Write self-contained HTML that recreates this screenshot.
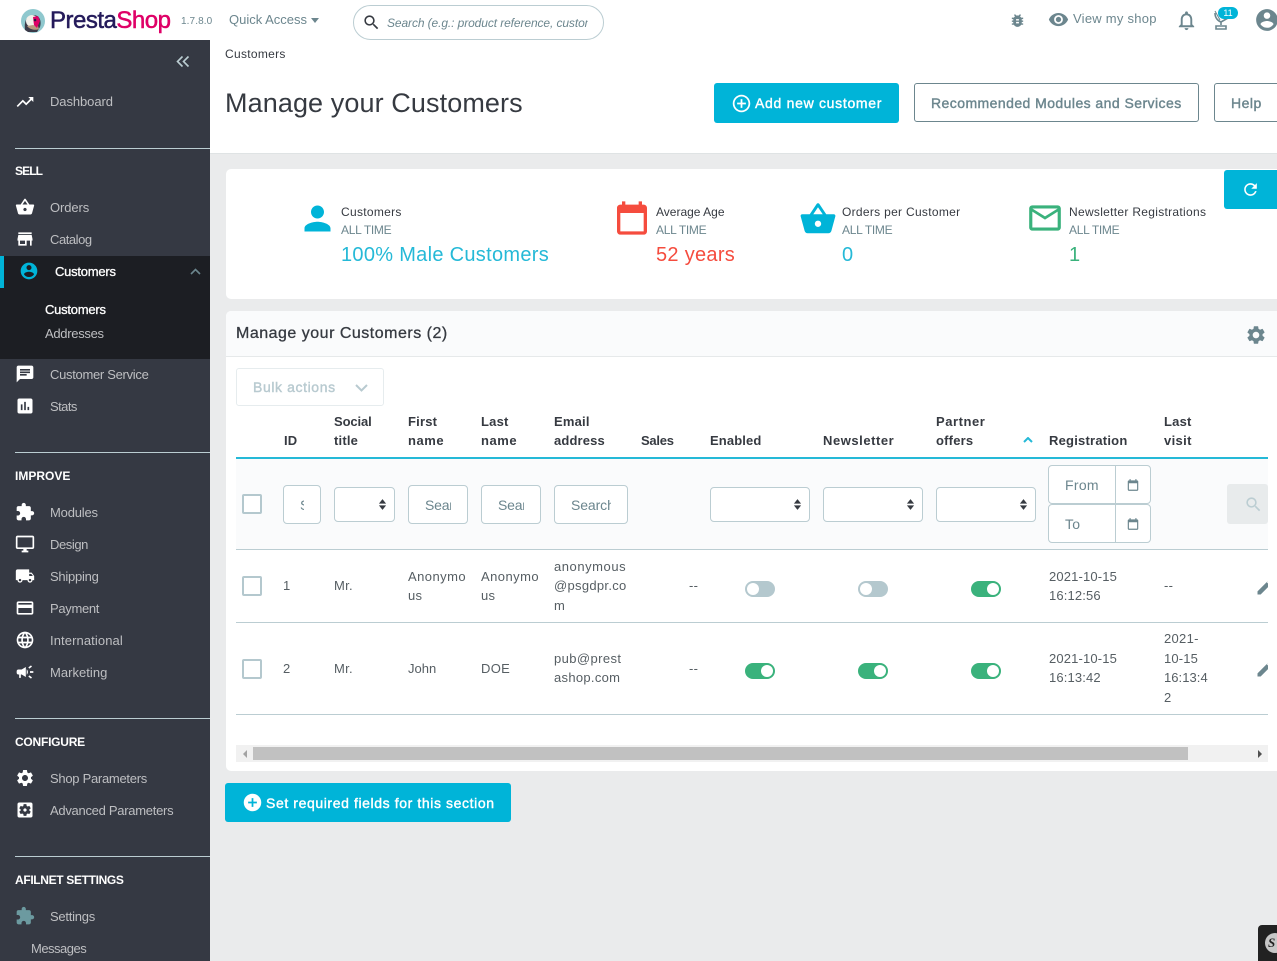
<!DOCTYPE html>
<html lang="en"><head><meta charset="utf-8"><title>Manage your Customers</title>
<style>
html,body{margin:0;padding:0}
body{width:1277px;height:961px;overflow:hidden;position:relative;background:#eaebec;font-family:"Liberation Sans",sans-serif;font-size:13px;color:#363a41}
.a,.t,svg.i{position:absolute}
.t{white-space:nowrap;line-height:20px;height:20px;letter-spacing:.3px}
.s{-webkit-text-stroke:.3px currentColor}
.w{-webkit-text-stroke:.4px currentColor}
.m{color:#bebfc2;letter-spacing:-.2px;margin-top:1px}
.h{color:#fff;font-weight:bold;font-size:12px;letter-spacing:-.2px;margin-top:1px}
.d{height:1px;left:15px;width:195px;background:#bbcdd2}
.g{color:#6c868e;font-size:12px}
.k{letter-spacing:-.3px;margin-top:1px}
.th{font-weight:bold;color:#363a41;letter-spacing:.2px;margin-top:1px}
.b{color:#565e63;font-size:13px;letter-spacing:.3px}
.c{color:#363a41;margin-top:1px}
.in{background:#fff;border:1px solid #bbcdd2;border-radius:4px;box-sizing:border-box}
.cb{width:20px;height:20px;border:2px solid #b4c8ce;border-radius:2px;box-sizing:border-box;background:#fff;left:242px}
.tg{width:30px;height:16px;border-radius:8px}
.tg:after{content:"";position:absolute;top:2px;width:12px;height:12px;border-radius:50%;background:#fff}
.on{background:#3ab27c}.on:after{right:2px}
.of{background:#b4c8ce}.of:after{left:2px}
.r{height:1px;left:236px;width:1032px;background:#bbcdd2}
svg.i{fill:currentColor}
</style></head><body>
<svg width="0" height="0" style="position:absolute"><defs>
<symbol id="trend" viewBox="0 0 24 24"><path d="M16 6l2.29 2.29-4.88 4.88-4-4L2 16.59 3.41 18l6-6 4 4 6.3-6.29L22 12V6z"/></symbol>
<symbol id="basket" viewBox="0 0 24 24"><path d="M17.21 9l-4.38-6.56c-.19-.28-.51-.42-.83-.42-.32 0-.64.14-.83.43L6.79 9H2c-.55 0-1 .45-1 1 0 .09.01.18.04.27l2.54 9.27c.23.84 1 1.46 1.92 1.46h13c.92 0 1.69-.62 1.93-1.46l2.54-9.27L23 10c0-.55-.45-1-1-1h-4.79zM9 9l3-4.4L15 9H9zm3 8c-1.1 0-2-.9-2-2s.9-2 2-2 2 .9 2 2-.9 2-2 2z"/></symbol>
<symbol id="store" viewBox="0 0 24 24"><path d="M20 4H4v2h16V4zm1 10v-2l-1-5H4l-1 5v2h1v6h10v-6h4v6h2v-6h1zm-9 4H6v-4h6v4z"/></symbol>
<symbol id="acct" viewBox="0 0 24 24"><path d="M12 2C6.48 2 2 6.48 2 12s4.48 10 10 10 10-4.48 10-10S17.52 2 12 2zm0 3c1.66 0 3 1.34 3 3s-1.34 3-3 3-3-1.34-3-3 1.34-3 3-3zm0 14.2c-2.5 0-4.71-1.28-6-3.22.03-1.99 4-3.08 6-3.08 1.99 0 5.97 1.09 6 3.08-1.29 1.94-3.5 3.22-6 3.22z"/></symbol>
<symbol id="chat" viewBox="0 0 24 24"><path d="M20 2H4c-1.1 0-1.99.9-1.99 2L2 22l4-4h14c1.1 0 2-.9 2-2V4c0-1.1-.9-2-2-2zM6 9h12v2H6V9zm8 5H6v-2h8v2zm4-6H6V6h12v2z"/></symbol>
<symbol id="stats" viewBox="0 0 24 24"><path d="M19 3H5c-1.1 0-2 .9-2 2v14c0 1.1.9 2 2 2h14c1.1 0 2-.9 2-2V5c0-1.1-.9-2-2-2zM9 17H7v-7h2v7zm4 0h-2V7h2v10zm4 0h-2v-4h2v4z"/></symbol>
<symbol id="ext" viewBox="0 0 24 24"><path d="M20.5 11H19V7c0-1.1-.9-2-2-2h-4V3.5C13 2.12 11.88 1 10.5 1S8 2.12 8 3.5V5H4c-1.1 0-1.99.9-1.99 2v3.8H3.5c1.49 0 2.7 1.21 2.7 2.7s-1.21 2.7-2.7 2.7H2V20c0 1.1.9 2 2 2h3.8v-1.5c0-1.49 1.21-2.7 2.7-2.7 1.49 0 2.7 1.21 2.7 2.7V22H17c1.1 0 2-.9 2-2v-4h1.5c1.38 0 2.5-1.12 2.5-2.5S21.88 11 20.5 11z"/></symbol>
<symbol id="desk" viewBox="0 0 24 24"><path d="M21 2H3c-1.1 0-2 .9-2 2v12c0 1.1.9 2 2 2h7v2H8v2h8v-2h-2v-2h7c1.1 0 2-.9 2-2V4c0-1.1-.9-2-2-2zm0 14H3V4h18v12z"/></symbol>
<symbol id="ship" viewBox="0 0 24 24"><path d="M20 8h-3V4H3c-1.1 0-2 .9-2 2v11h2c0 1.66 1.34 3 3 3s3-1.34 3-3h6c0 1.66 1.34 3 3 3s3-1.34 3-3h2v-5l-3-4zM6 18.5c-.83 0-1.5-.67-1.5-1.5s.67-1.5 1.5-1.5 1.5.67 1.5 1.5-.67 1.5-1.5 1.5zm13.5-9l1.96 2.5H17V9.5h2.5zm-1.5 9c-.83 0-1.5-.67-1.5-1.5s.67-1.5 1.5-1.5 1.5.67 1.5 1.5-.67 1.5-1.5 1.5z"/></symbol>
<symbol id="pay" viewBox="0 0 24 24"><path d="M20 4H4c-1.11 0-1.99.89-1.99 2L2 18c0 1.11.89 2 2 2h16c1.11 0 2-.89 2-2V6c0-1.11-.89-2-2-2zm0 14H4v-6h16v6zm0-10H4V6h16v2z"/></symbol>
<symbol id="lang" viewBox="0 0 24 24"><path d="M11.99 2C6.47 2 2 6.48 2 12s4.47 10 9.99 10C17.52 22 22 17.52 22 12S17.52 2 11.99 2zm6.93 6h-2.95c-.32-1.25-.78-2.45-1.38-3.56 1.84.63 3.37 1.91 4.33 3.56zM12 4.04c.83 1.2 1.48 2.53 1.91 3.96h-3.82c.43-1.43 1.08-2.76 1.91-3.96zM4.26 14C4.1 13.36 4 12.69 4 12s.1-1.36.26-2h3.38c-.08.66-.14 1.32-.14 2 0 .68.06 1.34.14 2H4.26zm.82 2h2.95c.32 1.25.78 2.45 1.38 3.56-1.84-.63-3.37-1.9-4.33-3.56zm2.95-8H5.08c.96-1.66 2.49-2.93 4.33-3.56C8.81 5.55 8.35 6.75 8.03 8zM12 19.96c-.83-1.2-1.48-2.53-1.91-3.96h3.82c-.43 1.43-1.08 2.76-1.91 3.96zM14.34 14H9.66c-.09-.66-.16-1.32-.16-2 0-.68.07-1.35.16-2h4.68c.09.65.16 1.32.16 2 0 .68-.07 1.34-.16 2zm.25 5.56c.6-1.11 1.06-2.31 1.38-3.56h2.95c-.96 1.65-2.49 2.93-4.33 3.56zM16.36 14c.08-.66.14-1.32.14-2 0-.68-.06-1.34-.14-2h3.38c.16.64.26 1.31.26 2s-.1 1.36-.26 2h-3.38z"/></symbol>
<symbol id="mega" viewBox="0 0 24 24"><path d="M18 11v2h4v-2h-4zm-2 6.61c.96.71 2.21 1.65 3.2 2.39.4-.53.8-1.07 1.2-1.6-.99-.74-2.24-1.68-3.2-2.4-.4.54-.8 1.08-1.2 1.61zM20.4 5.6c-.4-.53-.8-1.07-1.2-1.6-.99.74-2.24 1.68-3.2 2.4.4.53.8 1.07 1.2 1.6.96-.72 2.21-1.65 3.2-2.4zM4 9c-1.1 0-2 .9-2 2v2c0 1.1.9 2 2 2h1v4h2v-4h1l5 3V6L8 9H4zm11.5 3c0-1.33-.58-2.53-1.5-3.35v6.69c.92-.81 1.5-2.01 1.5-3.34z"/></symbol>
<symbol id="gear" viewBox="0 0 24 24"><path d="M19.14 12.94c.04-.3.06-.61.06-.94 0-.32-.02-.64-.07-.94l2.03-1.58c.18-.14.23-.41.12-.61l-1.92-3.32c-.12-.22-.37-.29-.59-.22l-2.39.96c-.5-.38-1.03-.7-1.62-.94l-.36-2.54c-.04-.24-.24-.41-.48-.41h-3.84c-.24 0-.43.17-.47.41l-.36 2.54c-.59.24-1.13.57-1.62.94l-2.39-.96c-.22-.08-.47 0-.59.22L2.74 8.87c-.12.21-.08.47.12.61l2.03 1.58c-.05.3-.09.63-.09.94s.02.64.07.94l-2.03 1.58c-.18.14-.23.41-.12.61l1.92 3.32c.12.22.37.29.59.22l2.39-.96c.5.38 1.03.7 1.62.94l.36 2.54c.05.24.24.41.48.41h3.84c.24 0 .44-.17.47-.41l.36-2.54c.59-.24 1.13-.56 1.62-.94l2.39.96c.22.08.47 0 .59-.22l1.92-3.32c.12-.22.07-.47-.12-.61l-2.01-1.58zM12 15.6c-1.98 0-3.6-1.62-3.6-3.6s1.62-3.6 3.6-3.6 3.6 1.62 3.6 3.6-1.62 3.6-3.6 3.6z"/></symbol>
<symbol id="adv" viewBox="0 0 24 24"><path d="M12 10c-1.1 0-2 .9-2 2s.9 2 2 2 2-.9 2-2-.9-2-2-2zm7-7H5c-1.11 0-2 .9-2 2v14c0 1.1.89 2 2 2h14c1.11 0 2-.9 2-2V5c0-1.1-.89-2-2-2zm-1.75 9c0 .23-.02.46-.05.68l1.48 1.16c.13.11.17.3.08.45l-1.4 2.42c-.09.15-.27.21-.43.15l-1.74-.7c-.36.28-.76.51-1.18.69l-.26 1.85c-.03.17-.18.3-.35.3h-2.8c-.17 0-.32-.13-.35-.29l-.26-1.85c-.43-.18-.82-.41-1.18-.69l-1.74.7c-.16.06-.34 0-.43-.15l-1.4-2.42c-.09-.15-.05-.34.08-.45l1.48-1.16c-.03-.23-.05-.46-.05-.69 0-.23.02-.46.05-.68l-1.48-1.16c-.13-.11-.17-.3-.08-.45l1.4-2.42c.09-.15.27-.21.43-.15l1.74.7c.36-.28.76-.51 1.18-.69l.26-1.85c.03-.17.18-.3.35-.3h2.8c.17 0 .32.13.35.29l.26 1.85c.43.18.82.41 1.18.69l1.74-.7c.16-.06.34 0 .43.15l1.4 2.42c.09.15.05.34-.08.45l-1.48 1.16c.03.23.05.46.05.69z"/></symbol>
<symbol id="bug" viewBox="0 0 24 24"><path d="M20 8h-2.81c-.45-.78-1.07-1.45-1.82-1.96L17 4.41 15.59 3l-2.17 2.17C12.96 5.06 12.49 5 12 5c-.49 0-.96.06-1.41.17L8.41 3 7 4.41l1.62 1.63C7.88 6.55 7.26 7.22 6.81 8H4v2h2.09c-.05.33-.09.66-.09 1v1H4v2h2v1c0 .34.04.67.09 1H4v2h2.81c1.04 1.79 2.97 3 5.19 3s4.15-1.21 5.19-3H20v-2h-2.09c.05-.33.09-.66.09-1v-1h2v-2h-2v-1c0-.34-.04-.67-.09-1H20V8zm-6 8h-4v-2h4v2zm0-4h-4v-2h4v2z"/></symbol>
<symbol id="eye" viewBox="0 0 24 24"><path d="M12 4.5C7 4.5 2.73 7.61 1 12c1.73 4.39 6 7.5 11 7.5s9.27-3.11 11-7.5c-1.73-4.39-6-7.5-11-7.5zM12 17c-2.76 0-5-2.24-5-5s2.24-5 5-5 5 2.24 5 5-2.24 5-5 5zm0-8c-1.66 0-3 1.34-3 3s1.34 3 3 3 3-1.34 3-3-1.34-3-3-3z"/></symbol>
<symbol id="bell" viewBox="0 0 24 24"><path d="M12 22c1.1 0 2-.9 2-2h-4c0 1.1.89 2 2 2zm6-6v-5c0-3.07-1.64-5.64-4.5-6.32V4c0-.83-.67-1.5-1.5-1.5s-1.5.67-1.5 1.5v.68C7.63 5.36 6 7.92 6 11v5l-2 2v1h16v-1l-2-2zm-2 1H8v-6c0-2.48 1.51-4.5 4-4.5s4 2.02 4 4.5v6z"/></symbol>
<symbol id="ref" viewBox="0 0 24 24"><path d="M17.65 6.35C16.2 4.9 14.21 4 12 4c-4.42 0-7.99 3.58-7.99 8s3.57 8 7.99 8c3.73 0 6.84-2.55 7.73-6h-2.08c-.82 2.33-3.04 4-5.65 4-3.31 0-6-2.69-6-6s2.69-6 6-6c1.66 0 3.14.69 4.22 1.78L13 11h7V4l-2.35 2.35z"/></symbol>
<symbol id="person" viewBox="0 0 24 24"><path d="M12 12c2.21 0 4-1.79 4-4s-1.79-4-4-4-4 1.79-4 4 1.79 4 4 4zm0 2c-2.67 0-8 1.34-8 4v2h16v-2c0-2.66-5.33-4-8-4z"/></symbol>
<symbol id="mail" viewBox="0 0 24 24"><path d="M20 4H4c-1.1 0-1.99.9-1.99 2L2 18c0 1.1.9 2 2 2h16c1.1 0 2-.9 2-2V6c0-1.1-.9-2-2-2zm0 14H4V8l8 5 8-5v10zm-8-7L4 6h16l-8 5z" fill-rule="evenodd"/></symbol>
<symbol id="cal" viewBox="0 0 24 24"><path d="M19 4h-1V2h-2v2H8V2H6v2H5c-1.11 0-2 .9-2 2v14a2 2 0 0 0 2 2h14c1.1 0 2-.9 2-2V6c0-1.1-.9-2-2-2zm0 16H5V9h14v11z"/></symbol>
<symbol id="edit" viewBox="0 0 24 24"><path d="M3 17.25V21h3.75L17.81 9.94l-3.75-3.75L3 17.25zM20.71 7.04c.39-.39.39-1.02 0-1.41l-2.34-2.34c-.39-.39-1.02-.39-1.41 0l-1.83 1.83 3.75 3.75 1.83-1.83z"/></symbol>
<symbol id="search" viewBox="0 0 24 24"><path d="M15.5 14h-.79l-.28-.27C15.41 12.59 16 11.11 16 9.5 16 5.91 13.09 3 9.5 3S3 5.91 3 9.5 5.91 16 9.5 16c1.61 0 3.09-.59 4.23-1.57l.27.28v.79l5 4.99L20.49 19l-4.99-5zm-6 0C7.01 14 5 11.99 5 9.5S7.01 5 9.5 5 14 7.01 14 9.5 11.99 14 9.5 14z"/></symbol>
<symbol id="addo" viewBox="0 0 24 24"><path d="M13 7h-2v4H7v2h4v4h2v-4h4v-2h-4V7zm-1-5C6.48 2 2 6.48 2 12s4.48 10 10 10 10-4.48 10-10S17.52 2 12 2zm0 18c-4.41 0-8-3.59-8-8s3.59-8 8-8 8 3.59 8 8-3.59 8-8 8z"/></symbol>
<symbol id="add" viewBox="0 0 24 24"><path d="M12 2C6.48 2 2 6.48 2 12s4.48 10 10 10 10-4.48 10-10S17.52 2 12 2zm5 11h-4v4h-2v-4H7v-2h4V7h2v4h4v2z"/></symbol>
<symbol id="updown" viewBox="0 0 10 14"><path d="M5 1l4 5H1zM5 13L1 8h8z"/></symbol>
</defs></svg>

<!-- Header -->
<div class="a" style="left:0;top:0;width:1277px;height:153px;background:#fff"></div>
<svg class="a" style="left:20px;top:8px" width="26" height="26" viewBox="0 0 26 26"><circle cx="13" cy="13" r="12" fill="#8fc8ce"/><path d="M5 22c-1-8 1-14 8-15 6 0 9 5 7 12l-3 5H8z" fill="#3b3a48"/><circle cx="12" cy="13" r="6" fill="#f2efe9"/><path d="M7 18c2 3 8 5 12 3l-1-3-5-1z" fill="#b79a7f"/><path d="M13 9l5-1 2 5-3 7-3-3z" fill="#df0067"/><circle cx="15" cy="12" r="1.3" fill="#2a1a3e"/></svg>
<div class="t" style="left:50px;top:6px;height:30px;line-height:30px;font-size:24px;letter-spacing:-.5px;color:#251b5b;-webkit-text-stroke:.5px currentColor">Presta<span style="color:#df0067">Shop</span></div>
<div class="t" style="left:181px;top:12px;font-size:10px;color:#6c868e;letter-spacing:.1px">1.7.8.0</div>
<div class="t" style="left:229px;top:9px;color:#6c868e;letter-spacing:0;margin-top:1px">Quick Access</div>
<div class="a" style="left:311px;top:18px;border:4.5px solid transparent;border-top:5px solid #6c868e;border-bottom:0"></div>
<div class="a" style="left:353px;top:5px;width:251px;height:35px;border:1px solid #bbcdd2;border-radius:18px;box-sizing:border-box;background:#fff"></div>
<svg class="i" style="left:362px;top:13px;color:#363a41" width="19" height="19"><use href="#search"/></svg>
<div class="t" style="left:387px;top:13px;width:201px;overflow:hidden;font-style:italic;font-size:12px;color:#6c868e;letter-spacing:-.1px">Search (e.g.: product reference, custom</div>

<svg class="i" style="left:1009px;top:12px;color:#6c868e" width="17" height="17"><use href="#bug"/></svg>
<svg class="i" style="left:1048px;top:9px;color:#6c868e" width="21" height="21"><use href="#eye"/></svg>
<div class="t" style="left:1073px;top:9px;color:#6c868e;letter-spacing:.25px">View my shop</div>
<svg class="i" style="left:1175px;top:9px;color:#6c868e" width="23" height="23"><use href="#bell"/></svg>
<svg class="a" style="left:1212px;top:10px" width="20" height="21" viewBox="0 0 20 21" fill="none" stroke="#6c868e" stroke-width="1.6"><path d="M3 3c0 5 3 8 6 9l7-4M9 12v3"/><path d="M4 16h10v3H4z"/><path d="M3 1l5 9" stroke-width="1"/></svg>
<div class="a" style="left:1218px;top:7px;width:20px;height:12px;border-radius:6px;background:#00b4d8;color:#fff;font-size:9px;line-height:12px;text-align:center">11</div>
<svg class="i" style="left:1254px;top:7px;color:#6c868e" width="26" height="26"><use href="#acct"/></svg>

<div class="t" style="left:225px;top:44px;font-size:12px;letter-spacing:.3px;color:#363a41">Customers</div>
<div class="t" style="left:225px;top:85px;height:36px;line-height:36px;font-size:27px;letter-spacing:.1px;color:#363a41">Manage your Customers</div>

<div class="a" style="left:714px;top:83px;width:185px;height:40px;background:#00b4d8;border-radius:3px"></div>
<svg class="i" style="left:731px;top:93px;color:#fff" width="21" height="21"><use href="#addo"/></svg>
<div class="t w" style="left:755px;top:93px;font-size:14px;color:#fff;letter-spacing:.7px">Add new customer</div>
<div class="a" style="left:914px;top:83px;width:285px;height:39px;border:1px solid #6c868e;border-radius:3px;box-sizing:border-box;background:#fff"></div>
<div class="t w" style="left:931px;top:93px;font-size:14px;color:#6c868e;letter-spacing:.44px">Recommended Modules and Services</div>
<div class="a" style="left:1214px;top:83px;width:80px;height:39px;border:1px solid #6c868e;border-radius:3px;box-sizing:border-box;background:#fff"></div>
<div class="t w" style="left:1231px;top:93px;font-size:14px;color:#6c868e;letter-spacing:.5px">Help</div>
<div class="a" style="left:0;top:153px;width:1277px;height:1px;background:#dfe3e4"></div>

<!-- Sidebar -->
<div class="a" style="left:0;top:40px;width:210px;height:921px;background:#353943"></div>
<div class="a" style="left:0;top:256px;width:210px;height:103px;background:#1c1e23"></div>
<div class="a" style="left:0;top:256px;width:4px;height:32px;background:#00b4d8"></div>
<svg class="a" style="left:176px;top:55px" width="14" height="13" viewBox="0 0 14 13" fill="none" stroke="#bbcdd2" stroke-width="1.6"><path d="M6.5 1.5L1.5 6.500l5 5M12.500 1.500l-5 5 5 5"/></svg>
<svg class="i" style="left:15px;top:92px;color:#fff" width="20" height="20"><use href="#trend"/></svg>
<div class="t m" style="left:50px;top:91px;letter-spacing:-.08px">Dashboard</div>
<div class="a d" style="top:148px"></div>
<div class="t h" style="left:15px;top:160px;letter-spacing:-.9px">SELL</div>
<svg class="i" style="left:15px;top:197px;color:#fff" width="20" height="20"><use href="#basket"/></svg>
<div class="t m" style="left:50px;top:197px;letter-spacing:-.1px">Orders</div>
<svg class="i" style="left:15px;top:229px;color:#fff" width="20" height="20"><use href="#store"/></svg>
<div class="t m" style="left:50px;top:229px;letter-spacing:-.45px">Catalog</div>
<svg class="i" style="left:19px;top:261px;color:#00b4d8" width="20" height="20"><use href="#acct"/></svg>
<div class="t s" style="left:55px;top:262px;color:#fff;letter-spacing:-.23px">Customers</div>
<svg class="a" style="left:190px;top:268px" width="11" height="7" viewBox="0 0 11 7" fill="none" stroke="#6c868e" stroke-width="1.6"><path d="M1 6l4.500-4.500L10 6"/></svg>
<div class="t s" style="left:45px;top:300px;color:#fff;letter-spacing:-.23px">Customers</div>
<div class="t m" style="left:45px;top:323px;letter-spacing:-.3px">Addresses</div>
<svg class="i" style="left:15px;top:364px;color:#fff" width="20" height="20"><use href="#chat"/></svg>
<div class="t m" style="left:50px;top:364px;letter-spacing:-.3px">Customer Service</div>
<svg class="i" style="left:15px;top:396px;color:#fff" width="20" height="20"><use href="#stats"/></svg>
<div class="t m" style="left:50px;top:396px;letter-spacing:-.55px">Stats</div>
<div class="a d" style="top:452px"></div>
<div class="t h" style="left:15px;top:465px;letter-spacing:0">IMPROVE</div>
<svg class="i" style="left:15px;top:502px;color:#fff" width="20" height="20"><use href="#ext"/></svg>
<div class="t m" style="left:50px;top:502px;letter-spacing:-.18px">Modules</div>
<svg class="i" style="left:15px;top:534px;color:#fff" width="20" height="20"><use href="#desk"/></svg>
<div class="t m" style="left:50px;top:534px;letter-spacing:-.42px">Design</div>
<svg class="i" style="left:15px;top:566px;color:#fff" width="20" height="20"><use href="#ship"/></svg>
<div class="t m" style="left:50px;top:566px;letter-spacing:-.25px">Shipping</div>
<svg class="i" style="left:15px;top:598px;color:#fff" width="20" height="20"><use href="#pay"/></svg>
<div class="t m" style="left:50px;top:598px;letter-spacing:-.32px">Payment</div>
<svg class="i" style="left:15px;top:630px;color:#fff" width="20" height="20"><use href="#lang"/></svg>
<div class="t m" style="left:50px;top:630px;letter-spacing:.1px">International</div>
<svg class="i" style="left:15px;top:662px;color:#fff" width="20" height="20"><use href="#mega"/></svg>
<div class="t m" style="left:50px;top:662px;letter-spacing:.03px">Marketing</div>
<div class="a d" style="top:718px"></div>
<div class="t h" style="left:15px;top:731px;letter-spacing:-.23px">CONFIGURE</div>
<svg class="i" style="left:15px;top:768px;color:#fff" width="20" height="20"><use href="#gear"/></svg>
<div class="t m" style="left:50px;top:768px;letter-spacing:-.28px">Shop Parameters</div>
<svg class="i" style="left:15px;top:800px;color:#fff" width="20" height="20"><use href="#adv"/></svg>
<div class="t m" style="left:50px;top:800px;letter-spacing:-.28px">Advanced Parameters</div>
<div class="a d" style="top:856px"></div>
<div class="t h" style="left:15px;top:869px;letter-spacing:-.34px">AFILNET SETTINGS</div>
<svg class="i" style="left:15px;top:906px;color:#6c9aa0" width="20" height="20"><use href="#ext"/></svg>
<div class="t m" style="left:50px;top:906px;letter-spacing:-.25px">Settings</div>
<div class="t m" style="left:31px;top:938px;letter-spacing:-.5px">Messages</div>

<!-- KPI card -->
<div class="a" style="left:226px;top:169px;width:1051px;height:130px;background:#fff;border-radius:5px 0 0 5px"></div>
<svg class="i" style="left:298px;top:199px;color:#00b4d8" width="39" height="39"><use href="#person"/></svg>
<div class="t c" style="left:341px;top:201px;font-size:12px">Customers</div>
<div class="t g k" style="left:341px;top:219px">ALL TIME</div>
<div class="t" style="left:341px;top:242px;height:26px;line-height:26px;font-size:20px;color:#25b9d7">100% Male Customers</div>
<svg class="i" style="left:612px;top:198px;color:#f54c3e" width="40" height="40"><use href="#cal"/></svg>
<div class="t c" style="left:656px;top:201px;font-size:12px;letter-spacing:0">Average Age</div>
<div class="t g k" style="left:656px;top:219px">ALL TIME</div>
<div class="t" style="left:656px;top:242px;height:26px;line-height:26px;font-size:20px;color:#f54c3e">52 years</div>
<svg class="i" style="left:799px;top:200px;color:#00b4d8" width="38" height="38"><use href="#basket"/></svg>
<div class="t c" style="left:842px;top:201px;font-size:12px">Orders per Customer</div>
<div class="t g k" style="left:842px;top:219px">ALL TIME</div>
<div class="t" style="left:842px;top:242px;height:26px;line-height:26px;font-size:20px;color:#25b9d7">0</div>
<svg class="i" style="left:1026px;top:199px;color:#3ab27c" width="38" height="38"><use href="#mail"/></svg>
<div class="t c" style="left:1069px;top:201px;font-size:12px">Newsletter Registrations</div>
<div class="t g k" style="left:1069px;top:219px">ALL TIME</div>
<div class="t" style="left:1069px;top:242px;height:26px;line-height:26px;font-size:20px;color:#3ab27c">1</div>
<div class="a" style="left:1224px;top:170px;width:60px;height:39px;background:#00b4d8;border-radius:3px"></div>
<svg class="i" style="left:1241px;top:180px;color:#fff" width="19" height="19"><use href="#ref"/></svg>

<!-- Panel -->
<div class="a" style="left:226px;top:311px;width:1051px;height:460px;background:#fff;border-radius:5px 0 0 5px"></div>
<div class="a" style="left:226px;top:311px;width:1051px;height:45px;background:#fafbfc;border-bottom:1px solid #e6e9ea;border-radius:5px 0 0 0"></div>
<div class="t s" style="left:236px;top:325px;font-size:16px;letter-spacing:.5px;color:#363a41;height:18px;line-height:18px">Manage your Customers (2)</div>
<svg class="i" style="left:1245px;top:324px;color:#6c868e" width="22" height="22"><use href="#gear"/></svg>
<div class="a" style="left:236px;top:368px;width:148px;height:38px;border:1px solid #e6ecee;border-radius:3px;box-sizing:border-box;background:#fff"></div>
<div class="t w" style="left:253px;top:377px;font-size:14px;color:#b8cad0;letter-spacing:.6px">Bulk actions</div>
<svg class="a" style="left:355px;top:384px" width="13" height="8" viewBox="0 0 13 8" fill="none" stroke="#b8cad0" stroke-width="2"><path d="M1 1l5.500 5.500L12 1"/></svg>

<div class="t th" style="left:284px;top:430px">ID</div>
<div class="t th" style="left:334px;top:411px;letter-spacing:-.1px">Social</div><div class="t th" style="left:334px;top:430px">title</div>
<div class="t th" style="left:408px;top:411px">First</div><div class="t th" style="left:408px;top:430px;letter-spacing:.55px">name</div>
<div class="t th" style="left:481px;top:411px">Last</div><div class="t th" style="left:481px;top:430px;letter-spacing:.55px">name</div>
<div class="t th" style="left:554px;top:411px">Email</div><div class="t th" style="left:554px;top:430px;letter-spacing:.15px">address</div>
<div class="t th" style="left:641px;top:430px;letter-spacing:-.25px">Sales</div>
<div class="t th" style="left:710px;top:430px;letter-spacing:.12px">Enabled</div>
<div class="t th" style="left:823px;top:430px;letter-spacing:.55px">Newsletter</div>
<div class="t th" style="left:936px;top:411px;letter-spacing:.55px">Partner</div><div class="t th" style="left:936px;top:430px">offers</div>
<svg class="a" style="left:1023px;top:437px" width="10" height="6" viewBox="0 0 10 6" fill="none" stroke="#25b9d7" stroke-width="2"><path d="M1 5l4-4 4 4"/></svg>
<div class="t th" style="left:1049px;top:430px;letter-spacing:.22px">Registration</div>
<div class="t th" style="left:1164px;top:411px">Last</div><div class="t th" style="left:1164px;top:430px;letter-spacing:.35px">visit</div>

<div class="a" style="left:236px;top:459px;width:1032px;height:90px;background:#fafbfc"></div>
<div class="a" style="left:236px;top:457px;width:1032px;height:2px;background:#25b9d7"></div>
<div class="a cb" style="top:494px"></div>
<div class="a in" style="left:283px;top:485px;width:38px;height:39px"></div><div class="t g" style="left:300px;top:495px;font-size:14px;width:4px;overflow:hidden;letter-spacing:0">S</div>
<div class="a in" style="left:334px;top:487px;width:61px;height:35px"></div><svg class="i" style="left:378px;top:498px;color:#363a41" width="9" height="13"><use href="#updown"/></svg>
<div class="a in" style="left:408px;top:485px;width:60px;height:39px"></div><div class="t g" style="left:425px;top:495px;font-size:14px;width:26px;overflow:hidden;letter-spacing:-.2px">Search</div>
<div class="a in" style="left:481px;top:485px;width:60px;height:39px"></div><div class="t g" style="left:498px;top:495px;font-size:14px;width:26px;overflow:hidden;letter-spacing:-.2px">Search</div>
<div class="a in" style="left:554px;top:485px;width:74px;height:39px"></div><div class="t g" style="left:571px;top:495px;font-size:14px;width:40px;overflow:hidden;letter-spacing:-.1px">Search</div>
<div class="a in" style="left:710px;top:487px;width:100px;height:35px"></div><svg class="i" style="left:793px;top:498px;color:#363a41" width="9" height="13"><use href="#updown"/></svg>
<div class="a in" style="left:823px;top:487px;width:100px;height:35px"></div><svg class="i" style="left:906px;top:498px;color:#363a41" width="9" height="13"><use href="#updown"/></svg>
<div class="a in" style="left:936px;top:487px;width:100px;height:35px"></div><svg class="i" style="left:1019px;top:498px;color:#363a41" width="9" height="13"><use href="#updown"/></svg>
<div class="a in" style="left:1048px;top:465px;width:103px;height:39px"></div><div class="a" style="left:1115px;top:465px;width:1px;height:39px;background:#bbcdd2"></div>
<div class="t g" style="left:1065px;top:475px;font-size:14px">From</div>
<svg class="i" style="left:1126px;top:478px;color:#6c868e" width="14" height="14"><use href="#cal"/></svg>
<div class="a in" style="left:1048px;top:504px;width:103px;height:39px"></div><div class="a" style="left:1115px;top:504px;width:1px;height:39px;background:#bbcdd2"></div>
<div class="t g" style="left:1065px;top:514px;font-size:14px">To</div>
<svg class="i" style="left:1126px;top:517px;color:#6c868e" width="14" height="14"><use href="#cal"/></svg>
<div class="a" style="left:1227px;top:484px;width:41px;height:40px;background:#e8ebec;border-radius:3px"></div>
<svg class="i" style="left:1244px;top:495px;color:#bbcdd2" width="19" height="19"><use href="#search"/></svg>
<div class="a r" style="top:549px"></div>

<!-- Row 1 -->
<div class="a cb" style="top:576px"></div>
<div class="t b" style="left:283px;top:575px;margin-top:1px">1</div>
<div class="t b" style="left:334px;top:575px;margin-top:1px">Mr.</div>
<div class="t b" style="left:408px;top:567px;letter-spacing:.45px">Anonymo</div><div class="t b" style="left:408px;top:586px">us</div>
<div class="t b" style="left:481px;top:567px;letter-spacing:.45px">Anonymo</div><div class="t b" style="left:481px;top:586px">us</div>
<div class="t b" style="left:554px;top:557px;letter-spacing:.55px">anonymous</div><div class="t b" style="left:554px;top:576px">@psgdpr.co</div><div class="t b" style="left:554px;top:596px">m</div>
<div class="t b" style="left:689px;top:576px">--</div>
<div class="a tg of" style="left:745px;top:581px"></div>
<div class="a tg of" style="left:858px;top:581px"></div>
<div class="a tg on" style="left:971px;top:581px"></div>
<div class="t b" style="left:1049px;top:567px;letter-spacing:.15px">2021-10-15</div><div class="t b" style="left:1049px;top:586px;letter-spacing:.15px">16:12:56</div>
<div class="t b" style="left:1164px;top:576px">--</div>
<div class="a" style="left:1250px;top:575px;width:18px;height:24px;overflow:hidden"><svg class="i" style="left:5px;top:2px;color:#6c868e" width="20" height="20"><use href="#edit"/></svg></div>
<div class="a r" style="top:622px"></div>

<!-- Row 2 -->
<div class="a cb" style="top:659px"></div>
<div class="t b" style="left:283px;top:659px">2</div>
<div class="t b" style="left:334px;top:659px">Mr.</div>
<div class="t b" style="left:408px;top:659px;letter-spacing:0">John</div>
<div class="t b" style="left:481px;top:659px">DOE</div>
<div class="t b" style="left:554px;top:649px;letter-spacing:.4px">pub@prest</div><div class="t b" style="left:554px;top:668px">ashop.com</div>
<div class="t b" style="left:689px;top:659px">--</div>
<div class="a tg on" style="left:745px;top:663px"></div>
<div class="a tg on" style="left:858px;top:663px"></div>
<div class="a tg on" style="left:971px;top:663px"></div>
<div class="t b" style="left:1049px;top:649px;letter-spacing:.15px">2021-10-15</div><div class="t b" style="left:1049px;top:668px;letter-spacing:.15px">16:13:42</div>
<div class="t b" style="left:1164px;top:629px">2021-</div><div class="t b" style="left:1164px;top:649px;letter-spacing:.15px">10-15</div><div class="t b" style="left:1164px;top:668px;letter-spacing:.05px">16:13:4</div><div class="t b" style="left:1164px;top:688px">2</div>
<div class="a" style="left:1250px;top:657px;width:18px;height:24px;overflow:hidden"><svg class="i" style="left:5px;top:2px;color:#6c868e" width="20" height="20"><use href="#edit"/></svg></div>
<div class="a r" style="top:714px"></div>

<!-- Scrollbar -->
<div class="a" style="left:236px;top:745px;width:1032px;height:17px;background:#f1f1f1"></div>
<div class="a" style="left:253px;top:747px;width:935px;height:13px;background:#c1c1c1"></div>
<div class="a" style="left:243px;top:750px;border:4px solid transparent;border-right:4px solid #a3a3a3;border-left:0"></div>
<div class="a" style="left:1258px;top:750px;border:4px solid transparent;border-left:4px solid #505050;border-right:0"></div>

<!-- Bottom button -->
<div class="a" style="left:225px;top:783px;width:286px;height:39px;background:#00b4d8;border-radius:3px"></div>
<svg class="i" style="left:242px;top:792px;color:#fff" width="21" height="21"><use href="#add"/></svg>
<div class="t w" style="left:266px;top:793px;font-size:14px;color:#fff;letter-spacing:.6px">Set required fields for this section</div>

<!-- Debug toolbar -->
<div class="a" style="left:1258px;top:925px;width:19px;height:36px;background:#222;border-radius:4px 0 0 0"></div>
<div class="a" style="left:1265px;top:933px;width:20px;height:20px;border-radius:50%;background:#c8c8c8;color:#222;font:italic bold 13px/20px 'Liberation Serif',serif;text-indent:3px">S</div>
</body></html>
